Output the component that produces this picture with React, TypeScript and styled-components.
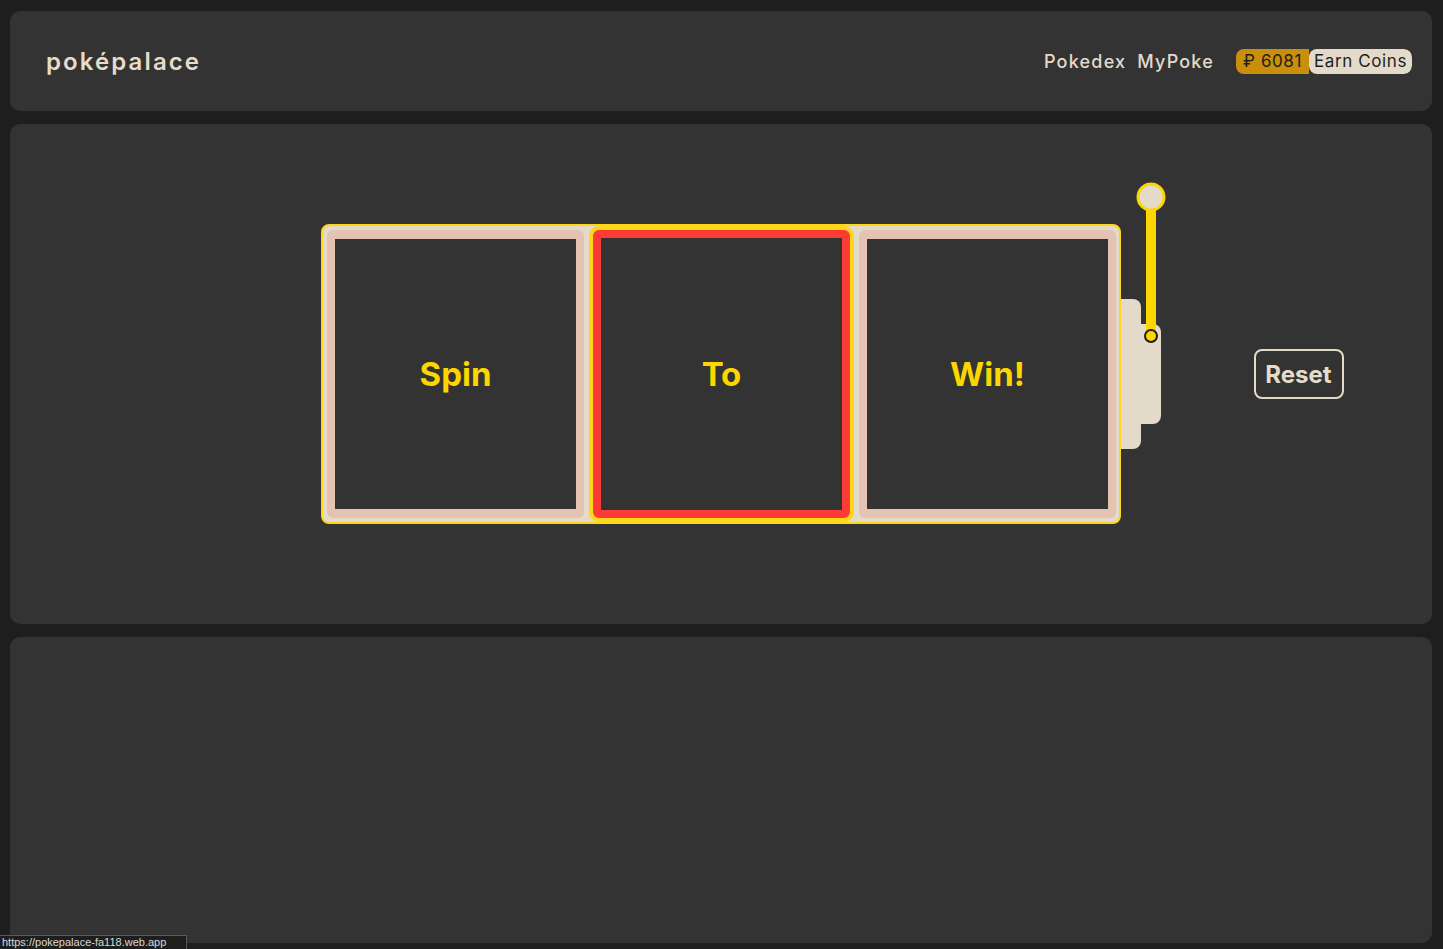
import { FC } from 'react'
import styled, { createGlobalStyle } from 'styled-components'

const GlobalStyle = createGlobalStyle`
  html, body {
    margin: 0;
    padding: 0;
    background: #1e1e1e;
    font-family: Inter, 'Open Sans', sans-serif;
  }
  * {
    box-sizing: border-box;
  }
`

const StyledPage = styled.div`
  min-height: 949px;
  padding: 11px 11px 6px 10px;
  display: flex;
  flex-direction: column;
  gap: 13px;
`

const StyledCard = styled.section`
  background: #333333;
  border-radius: 10px;
`

const StyledHeader = styled(StyledCard)`
  height: 100px;
  padding: 0 20px 0 36px;
  display: flex;
  align-items: center;
  justify-content: space-between;
`

const StyledLogo = styled.h1`
  margin: 0;
  font-size: 24px;
  font-weight: 600;
  color: #e8dcc8;
  letter-spacing: 2.1px;
`

const StyledNav = styled.nav`
  display: flex;
  align-items: center;
  gap: 11px;
`

const StyledNavLink = styled.a`
  font-size: 18px;
  font-weight: 500;
  color: #e3dac9;
  letter-spacing: 1.2px;
`

const StyledWallet = styled.div`
  margin-left: 11px;
  display: flex;
  height: 25px;
  border-radius: 8px;
  overflow: hidden;
  font-size: 17px;
  letter-spacing: 0.6px;
  color: #1e1e1e;
`

const StyledCoins = styled.span`
  background: #c98f0a;
  padding: 0 7px;
  display: flex;
  align-items: center;
`

const StyledEarn = styled.span`
  background: #e3dac9;
  border-radius: 8px;
  padding: 0 5px;
  display: flex;
  align-items: center;
`

const StyledMain = styled(StyledCard)`
  height: 500px;
  display: grid;
  grid-template-columns: 1fr auto 1fr;
  align-items: center;
`

const StyledMachine = styled.div`
  position: relative;
  grid-column: 2;
`

const StyledFrame = styled.div`
  display: flex;
  align-items: center;
  gap: 5px;
  width: 800px;
  height: 300px;
  padding: 0 3px 0 4px;
  background: #e3dac9;
  border: 2px solid #fdd61a;
  border-radius: 8px;
`

const StyledReel = styled.div<{ $active?: boolean }>`
  width: ${({ $active }) => ($active ? 265 : 257)}px;
  height: ${({ $active }) => ($active ? 296 : 288)}px;
  background: ${({ $active }) => ($active ? '#fc3b37' : '#e5c3b3')};
  border: ${({ $active }) => ($active ? '4px solid #fdd61a' : 'none')};
  border-radius: ${({ $active }) => ($active ? 10 : 6)}px;
  padding: ${({ $active }) => ($active ? '8px' : '9px 8px')};
`

const StyledWindow = styled.div`
  width: 100%;
  height: 100%;
  background: #333333;
  display: flex;
  align-items: center;
  justify-content: center;
  font-size: 33px;
  font-weight: 700;
  color: #fdd600;
`

const StyledLever = styled.div`
  position: absolute;
  left: 800px;
  top: -42px;
  width: 46px;
  height: 270px;
`

const StyledHousing = styled.div<{ $wide?: boolean }>`
  position: absolute;
  left: 0;
  top: ${({ $wide }) => ($wide ? 142 : 117)}px;
  width: ${({ $wide }) => ($wide ? 40 : 20)}px;
  height: ${({ $wide }) => ($wide ? 100 : 150)}px;
  background: #e3dac9;
  border-radius: 0 8px 8px 0;
`

const StyledResetCell = styled.div`
  display: flex;
  justify-content: center;
  padding-left: 44px;
`

const StyledReset = styled.button`
  width: 90px;
  height: 50px;
  background: transparent;
  border: 2px solid #e3dac9;
  border-radius: 8px;
  color: #e8dcc8;
  font-family: inherit;
  font-size: 24px;
  font-weight: 700;
  cursor: pointer;
`

const StyledBottom = styled(StyledCard)`
  flex: 1;
`

const StyledStatus = styled.div`
  position: fixed;
  left: 0;
  bottom: 0;
  width: 187px;
  height: 14px;
  padding: 0 2px;
  background: #1e1e1e;
  border: 1px solid #5a5a5a;
  border-left: none;
  border-bottom: none;
  font-family: 'Liberation Sans', sans-serif;
  font-size: 11px;
  line-height: 13px;
  color: #d8d8d8;
  white-space: nowrap;
`

const Lever: FC = () => (
  <StyledLever>
    <StyledHousing />
    <StyledHousing $wide />
    <svg width="46" height="270" style={{ position: 'absolute', left: 0, top: 0 }}>
      <line x1="30" y1="20" x2="30" y2="154" stroke="#fdd600" strokeWidth="10" />
      <circle cx="30" cy="154" r="6" fill="#fdd600" stroke="#1e1e1e" strokeWidth="2" />
      <circle cx="30" cy="15" r="13" fill="#e3dac9" stroke="#fdd600" strokeWidth="3" />
    </svg>
  </StyledLever>
)

const App: FC = () => {
  const words = ['Spin', 'To', 'Win!']

  return (
    <>
      <GlobalStyle />
      <StyledPage>
        <StyledHeader>
          <StyledLogo>poképalace</StyledLogo>
          <StyledNav>
            <StyledNavLink>Pokedex</StyledNavLink>
            <StyledNavLink>MyPoke</StyledNavLink>
            <StyledWallet>
              <StyledCoins>₽ 6081</StyledCoins>
              <StyledEarn>Earn Coins</StyledEarn>
            </StyledWallet>
          </StyledNav>
        </StyledHeader>

        <StyledMain>
          <StyledMachine>
            <StyledFrame>
              {words.map((word, i) => (
                <StyledReel key={word} $active={i === 1}>
                  <StyledWindow>{word}</StyledWindow>
                </StyledReel>
              ))}
            </StyledFrame>
            <Lever />
          </StyledMachine>
          <StyledResetCell>
            <StyledReset>Reset</StyledReset>
          </StyledResetCell>
        </StyledMain>

        <StyledBottom />
      </StyledPage>
      <StyledStatus>https://pokepalace-fa118.web.app</StyledStatus>
    </>
  )
}

export default App
